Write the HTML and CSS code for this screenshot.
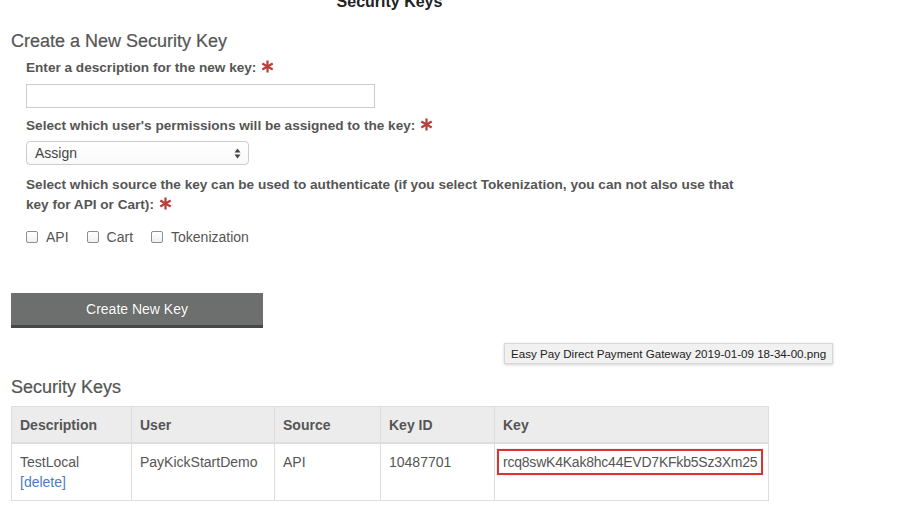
FILE: index.html
```html
<!DOCTYPE html>
<html>
<head>
<meta charset="utf-8">
<title>Security Keys</title>
<link rel="stylesheet" href="styles.css">
</head>
<body>
<div class="page">
  <h1 class="top-title">Security Keys</h1>
  <h2 class="section-title">Create a New Security Key</h2>
  <form class="form">
    <label class="label">Enter a description for the new key: <svg class="req" viewBox="0 0 14 14" width="13" height="13"><g stroke="#b5413c" stroke-width="2.4" stroke-linecap="butt"><line x1="7" y1="0.5" x2="7" y2="13.5"/><line x1="1.4" y1="3.75" x2="12.6" y2="10.25"/><line x1="1.4" y1="10.25" x2="12.6" y2="3.75"/></g></svg></label>
    <input class="text-input" type="text">
    <label class="label">Select which user's permissions will be assigned to the key: <svg class="req" viewBox="0 0 14 14" width="13" height="13"><g stroke="#b5413c" stroke-width="2.4"><line x1="7" y1="0.5" x2="7" y2="13.5"/><line x1="1.4" y1="3.75" x2="12.6" y2="10.25"/><line x1="1.4" y1="10.25" x2="12.6" y2="3.75"/></g></svg></label>
    <div class="select">
      <span>Assign</span>
      <svg class="select-arrows" viewBox="0 0 7 11" width="7" height="11"><path d="M3.5 0.5 L6.5 4.5 H0.5 Z M3.5 10.5 L6.5 6.5 H0.5 Z" fill="#444"/></svg>
    </div>
    <label class="label label-wide">Select which source the key can be used to authenticate (if you select Tokenization, you can not also use that key for API or Cart): <svg class="req" viewBox="0 0 14 14" width="13" height="13"><g stroke="#b5413c" stroke-width="2.4"><line x1="7" y1="0.5" x2="7" y2="13.5"/><line x1="1.4" y1="3.75" x2="12.6" y2="10.25"/><line x1="1.4" y1="10.25" x2="12.6" y2="3.75"/></g></svg></label>
    <div class="checks">
      <label class="check"><span class="box"></span>API</label>
      <label class="check"><span class="box"></span>Cart</label>
      <label class="check"><span class="box"></span>Tokenization</label>
    </div>
  </form>
  <button class="btn" type="button">Create New Key</button>
  <h2 class="section-title keys-title">Security Keys</h2>
  <table class="keys">
    <colgroup>
      <col class="c1"><col class="c2"><col class="c3"><col class="c4"><col class="c5">
    </colgroup>
    <thead>
      <tr><th>Description</th><th>User</th><th>Source</th><th>Key ID</th><th>Key</th></tr>
    </thead>
    <tbody>
      <tr>
        <td>TestLocal<br><a class="link" href="#">[delete]</a></td>
        <td>PayKickStartDemo</td>
        <td>API</td>
        <td>10487701</td>
        <td class="key-cell"><span class="key-box">rcq8swK4Kak8hc44EVD7KFkb5Sz3Xm25</span></td>
      </tr>
    </tbody>
  </table>
</div>
<div class="tooltip">Easy Pay Direct Payment Gateway 2019-01-09 18-34-00.png</div>
</body>
</html>
```
FILE: styles.css
```css
html, body {
  margin: 0;
  padding: 0;
  background: #fff;
}
body {
  font-family: "Liberation Sans", Arial, Helvetica, sans-serif;
  color: #555;
  width: 920px;
  height: 524px;
  overflow: hidden;
  position: relative;
}
.page {
  padding-left: 11px;
  width: 757px;
}
.top-title {
  margin: -7px 0 0;
  text-align: center;
  font-size: 16px;
  line-height: 18px;
  font-weight: bold;
  color: #222;
}
.section-title {
  margin: 19px 0 0;
  font-size: 18px;
  line-height: 22px;
  font-weight: normal;
  color: #555;
  -webkit-text-stroke: 0.2px #555;
}
.form {
  padding-left: 15px;
  margin: 6px 0 0;
}
.label {
  display: block;
  font-size: 13.6px;
  line-height: 20px;
  font-weight: bold;
  color: #555;
}
.req {
  vertical-align: -1px;
  margin-left: 1px;
}
.text-input {
  display: block;
  box-sizing: border-box;
  width: 349px;
  height: 24px;
  margin: 6px 0 8px;
  border: 1px solid #ccc;
  padding: 0 6px;
  font: inherit;
  outline: none;
}
.select {
  box-sizing: border-box;
  width: 223px;
  height: 24px;
  margin: 5px 0 10px;
  border: 1px solid #ccc;
  border-radius: 4px;
  display: flex;
  align-items: center;
  justify-content: space-between;
  padding: 0 7px 0 8px;
  font-size: 14px;
  color: #444;
  background: linear-gradient(#fff, #f9f9f9);
}
.label-wide {
  width: 722px;
}
.checks {
  display: flex;
  margin-top: 12px;
  height: 20px;
  align-items: center;
}
.check {
  display: flex;
  align-items: center;
  font-size: 14px;
  line-height: 20px;
  color: #555;
  margin-right: 18px;
}
.box {
  width: 10px;
  height: 10px;
  border: 1px solid #8e8e8e;
  border-radius: 2px;
  background: linear-gradient(#fff, #f0f0f0);
  margin-right: 8px;
}
.btn {
  display: block;
  margin-top: 46px;
  width: 252px;
  height: 35px;
  border: none;
  border-bottom: 3px solid #454847;
  background: #6c6f6e;
  color: #fff;
  font-family: "Liberation Sans", Arial, sans-serif;
  font-size: 14px;
  padding: 0;
  text-shadow: 0 0 1px rgba(0,0,0,0.3);
}
.keys-title {
  margin-top: 48px;
}
.keys {
  margin-top: 8px;
  border-collapse: collapse;
  width: 757px;
  table-layout: fixed;
  font-size: 14px;
  color: #555;
}
.c1 { width: 120px; }
.c2 { width: 143px; }
.c3 { width: 106px; }
.c4 { width: 114px; }
.c5 { width: 274px; }
.keys th, .keys td {
  border: 1px solid #ddd;
  text-align: left;
  vertical-align: top;
  padding: 8px 8px;
  line-height: 20px;
}
.keys th {
  background: #ececec;
  font-weight: bold;
  border-bottom: 2px solid #ddd;
  padding-bottom: 7px;
}
.keys td {
  padding-bottom: 8px;
}
.link {
  color: #4a7cc0;
  text-decoration: none;
}
.keys td.key-cell {
  padding-left: 2px;
  padding-top: 5px;
}
.key-box {
  display: inline-block;
  border: 2px solid #d8352d;
  padding: 1px 4px;
  line-height: 20px;
  letter-spacing: -0.22px;
  box-shadow: 0 0 1px rgba(0,0,0,0.3);
}
.tooltip {
  position: absolute;
  left: 504px;
  top: 343px;
  height: 19px;
  line-height: 19px;
  padding: 0 6px;
  background: #f1f1f1;
  border: 1px solid #d6d6d6;
  box-shadow: 0 1px 3px rgba(0,0,0,0.18);
  font-size: 11.6px;
  color: #222;
  white-space: nowrap;
}
```
